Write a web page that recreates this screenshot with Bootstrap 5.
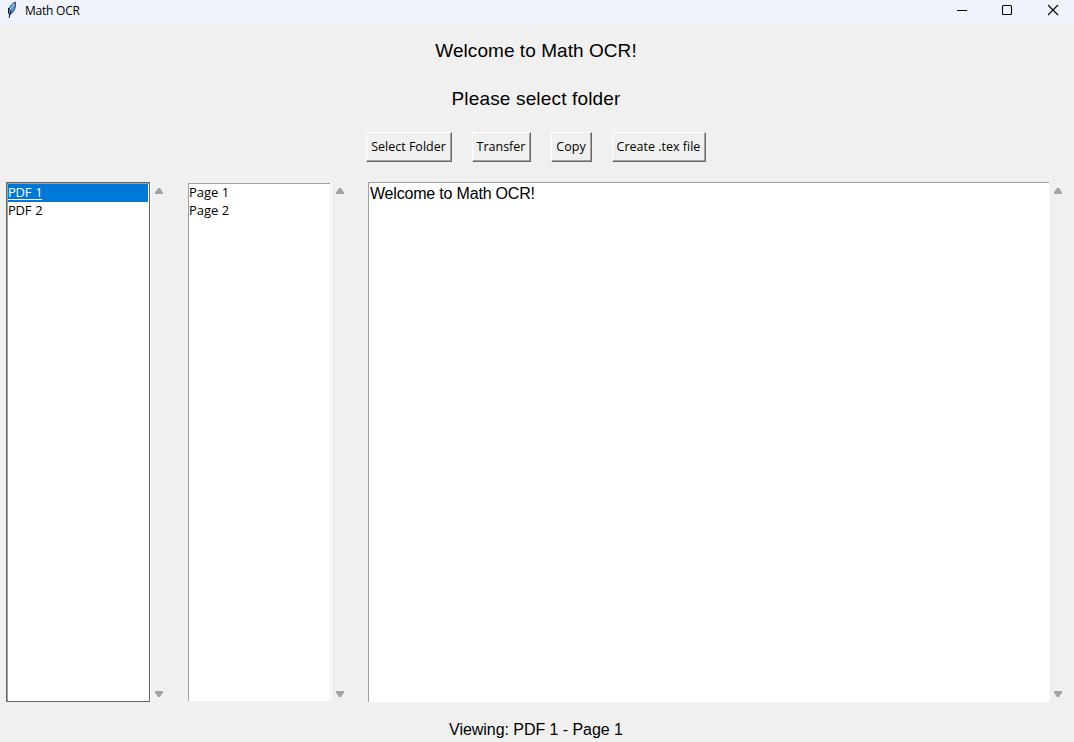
<!DOCTYPE html>
<html lang="en">
<head>
<meta charset="utf-8">
<title>Math OCR</title>
<link href="https://cdn.jsdelivr.net/npm/bootstrap@5.3.0/dist/css/bootstrap.min.css" rel="stylesheet">
<style>
body{width:1074px;height:742px;background:#f0f0f0;color:#000;font-family:"Open Sans","Noto Sans",sans-serif;font-size:13px;line-height:18px;white-space:nowrap}
svg{display:block;flex:none}
.titlebar{height:26px;background:#f0f3fa;font-size:12px;line-height:22px;padding-left:6px}
.caption{margin-left:7px;letter-spacing:-.22px}
.winctl{gap:34px;padding:4px 15px 0 0}
.arial{font-family:"Liberation Sans",Arial,sans-serif}
.heading{font-size:19px;line-height:24px;height:24px;padding-right:2px}
.heading.first{letter-spacing:.06px}
.heading.second{letter-spacing:.16px}
.tools{gap:20px;margin:21px 0 0 366px}
.tkbtn{height:30px;border-radius:0;padding:0 1px 0 0;font-size:12.5px;line-height:26px;color:#000;background:#f0f0f0;border:solid;border-width:1px;border-color:#fff #696969 #696969 #fff;box-shadow:inset -1px -1px #a0a0a0}
.panes{height:520px;margin:20px 0 0 6px}
.pane{background:#fff}
.item{height:18px;line-height:16px}
.pdfs{width:144px;border:1px solid #646464;box-shadow:inset 1px 1px #a0a0a0,1px 0 #fff;padding:1px;letter-spacing:-.3px;word-spacing:1px}
.pages{width:142px;height:518px;margin:1px 0 0 20px;border:solid #a0a0a0;border-width:1px 0 0 1px;box-shadow:1px 0 #f0f0f0,2px 0 #fff}
.editor{width:682px;margin-left:20px;border-left:1px solid #a0a0a0;background:linear-gradient(#a0a0a0,#a0a0a0) 0 0/680px 1px no-repeat #fff;font-size:16px;line-height:20px;padding:2px 0 0 1px;letter-spacing:-.19px}
.chosen{background:#0078d7;color:#fff}
.chosen span{text-underline-offset:2px;text-decoration-skip-ink:none}
.sbar{width:18px;padding:6px 0 5px 5px}
.pages + .sbar{padding-left:6px}
.editor + .sbar{padding-left:4px}
.status{font-size:16px;line-height:20px;margin-top:18px;height:20px;padding-right:2px;letter-spacing:-.05px}
</style>
</head>
<body class="overflow-hidden">
<header class="titlebar d-flex">
<svg width="12" height="20" viewBox="0 0 12 20"><path d="M9.200 2C5.500 4 2 8 2.500 13l1 2 2-1.500C8.500 11 10.500 6 9.200 2Z" fill="#529be8" stroke="#222" stroke-width=".8"/><path d="M5 10 3 18M2.500 8v5" fill="none" stroke="#111" stroke-width="1"/><path d="m7.500 4-3 5" stroke="#a9d0f8" stroke-width="1"/></svg>
<span class="caption">Math OCR</span>
<div class="winctl d-flex ms-auto">
<svg width="12" height="12" viewBox="0 0 12 12" shape-rendering="crispEdges"><path d="M2 6.500h10" stroke="#000"/></svg>
<svg width="12" height="12" viewBox="0 0 12 12"><rect x="1.500" y="1.500" width="9" height="9" rx="1" fill="none" stroke="#000" stroke-width="1.100"/></svg>
<svg width="12" height="12" viewBox="0 0 12 12"><path d="m1 1 10 10M11 1 1 11" stroke="#000" stroke-width="1.100"/></svg>
</div>
</header>
<main>
<div class="heading first arial text-center" style="margin-top:13px">Welcome to Math OCR!</div>
<div class="heading second arial text-center" style="margin-top:24px">Please select folder</div>
<div class="tools d-flex">
<button class="btn tkbtn" style="width:86px">Select Folder</button>
<button class="btn tkbtn" style="width:59px">Transfer</button>
<button class="btn tkbtn" style="width:41px">Copy</button>
<button class="btn tkbtn" style="width:94px">Create .tex file</button>
</div>
<div class="panes d-flex">
<div class="pane pdfs"><div class="item chosen"><span class="text-decoration-underline">PDF 1</span></div><div class="item">PDF 2</div></div>
<div class="sbar d-flex flex-column justify-content-between"><svg width="8" height="6"><path d="M0 6V4.500L3 0h2l3 4.500V6Z" fill="#a3a3a3"/></svg><svg width="8" height="6"><path d="M0 0V1.500L3 6h2l3-4.500V0Z" fill="#a3a3a3"/></svg></div>
<div class="pane pages"><div class="item">Page 1</div><div class="item">Page 2</div></div>
<div class="sbar d-flex flex-column justify-content-between"><svg width="8" height="6"><path d="M0 6V4.500L3 0h2l3 4.500V6Z" fill="#a3a3a3"/></svg><svg width="8" height="6"><path d="M0 0V1.500L3 6h2l3-4.500V0Z" fill="#a3a3a3"/></svg></div>
<div class="editor arial">Welcome to Math OCR!</div>
<div class="sbar d-flex flex-column justify-content-between"><svg width="8" height="6"><path d="M0 6V4.500L3 0h2l3 4.500V6Z" fill="#a3a3a3"/></svg><svg width="8" height="6"><path d="M0 0V1.500L3 6h2l3-4.500V0Z" fill="#a3a3a3"/></svg></div>
</div>
<div class="status arial text-center">Viewing: PDF 1 - Page 1</div>
</main>
<script src="https://cdn.jsdelivr.net/npm/bootstrap@5.3.0/dist/js/bootstrap.bundle.min.js"></script>
</body>
</html>
